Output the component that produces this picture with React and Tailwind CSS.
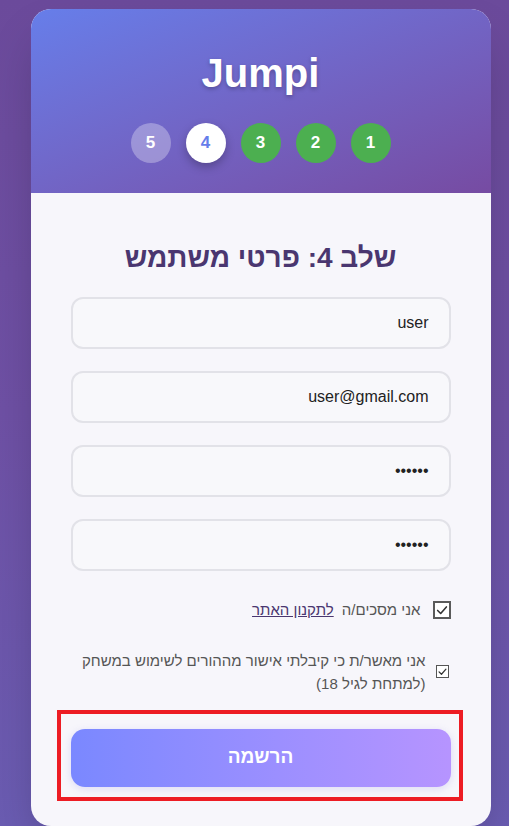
import React from "react";

const steps = [
  { n: 1, state: "done" },
  { n: 2, state: "done" },
  { n: 3, state: "done" },
  { n: 4, state: "active" },
  { n: 5, state: "todo" },
];

const Check = ({ size }) => (
  <svg viewBox="0 0 16 16" width={size} height={size} fill="none">
    <polyline
      points="3,8.5 6.5,12 13,4.5"
      stroke="#333"
      strokeWidth="1.8"
      strokeLinecap="round"
      strokeLinejoin="round"
    />
  </svg>
);

const Field = ({ value, type = "text" }) => (
  <input
    type={type}
    defaultValue={value}
    dir="rtl"
    className="w-full h-[52px] rounded-[12px] border-2 border-[#e2e2e8] bg-[#f8f8fb] px-[20px] text-[16px] text-[#222] outline-none"
  />
);

export default function App() {
  return (
    <div
      dir="rtl"
      className="min-h-screen bg-gradient-to-b from-[#6b4a9b] via-[#6e50a4] to-[#6a5cb2] pt-[9px] pl-[12px] flex justify-center"
      style={{ fontFamily: '"Liberation Sans", "DejaVu Sans", sans-serif' }}
    >
      <div className="w-[460px] rounded-[20px] bg-[#f7f6fb] overflow-hidden shadow-2xl">
        {/* HEADER */}
        <div className="bg-gradient-to-br from-[#667eea] to-[#764ba2] pt-[40px] pb-[30px] flex flex-col items-center">
          <h1 className="text-[40px] leading-[48px] font-bold text-white [text-shadow:0_2px_4px_rgba(0,0,0,0.25)]">
            Jumpi
          </h1>
          <div className="mt-[26px] flex gap-[15px]">
            {steps.map((s) => (
              <div
                key={s.n}
                className={
                  s.state === "done"
                    ? "w-10 h-10 rounded-full bg-[#4caf50] text-white flex items-center justify-center text-[17px] font-bold"
                    : s.state === "active"
                    ? "w-10 h-10 rounded-full bg-white text-[#667eea] flex items-center justify-center text-[17px] font-bold shadow-[0_4px_10px_rgba(0,0,0,0.25)]"
                    : "w-10 h-10 rounded-full bg-white/30 text-white flex items-center justify-center text-[17px] font-bold"
                }
              >
                {s.n}
              </div>
            ))}
          </div>
        </div>

        {/* BODY */}
        <div className="px-10 pt-[47px] pb-[38px]">
          <h2 className="text-center text-[28px] leading-[36px] font-bold text-[#4a3670] mb-[21px]">
            שלב 4: פרטי משתמש
          </h2>

          <div className="flex flex-col gap-[22px]">
            <Field value="user" />
            <Field value="user@gmail.com" />
            <Field value="123456" type="password" />
            <Field value="123456" type="password" />
          </div>

          {/* TERMS */}
          <div className="mt-[28px] flex items-center gap-[12px] text-[15px] text-[#555]">
            <span className="w-[18px] h-[18px] border-2 border-[#5a5a5a] bg-white flex items-center justify-center shrink-0">
              <Check size={14} />
            </span>
            <span>
              אני מסכים/ה{" "}
              <a href="#" className="mr-[4px] text-[#4a3670] underline">
                לתקנון האתר
              </a>
            </span>
          </div>

          <div className="mt-[27px] flex items-center gap-[10px] text-[15px] leading-[23px] text-[#555]">
            <span className="w-[13px] h-[13px] mr-[2px] border border-[#555] bg-white flex items-center justify-center shrink-0">
              <Check size={11} />
            </span>
            <span>אני מאשר/ת כי קיבלתי אישור מההורים לשימוש במשחק (למתחת לגיל 18)</span>
          </div>

          {/* SUBMIT */}
          <div className="relative mt-[34px]">
            <button className="w-full h-[58px] rounded-[14px] bg-gradient-to-r from-[#7a88ff] to-[#b694ff] text-white text-[19px] font-bold shadow-[0_2px_8px_rgba(120,110,220,0.2)]">
              הרשמה
            </button>
            <span className="pointer-events-none absolute -left-[14px] -right-[12px] -top-[19px] -bottom-[14px] border-4 border-[#ed1c24]" />
          </div>
        </div>
      </div>
    </div>
  );
}
